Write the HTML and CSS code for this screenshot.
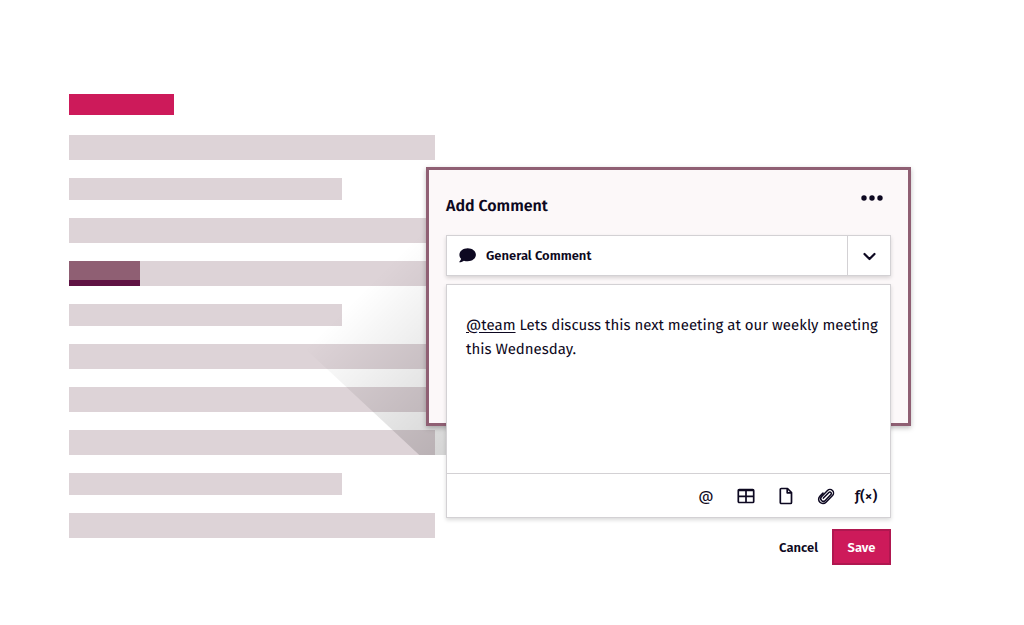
FILE: index.html
```html
<!DOCTYPE html>
<html lang="en">
<head>
<meta charset="UTF-8">
<title>Add Comment</title>
<meta name="viewport" content="width=device-width, initial-scale=1.0">
<link rel="stylesheet" href="styles.css">
</head>
<body>

<main class="stage">
  <!-- Placeholder document -->
  <div class="document" aria-hidden="true">
    <div class="line title"></div>
    <div class="line"></div>
    <div class="line short"></div>
    <div class="line"></div>
    <div class="line"><div class="highlight"></div></div>
    <div class="line short"></div>
    <div class="line"></div>
    <div class="line"></div>
    <div class="line"></div>
    <div class="line short"></div>
    <div class="line"></div>
    <div class="cast-shadow"></div>
  </div>

  <div class="comment">
    <div class="frame"></div>
    <form class="comment-form">
      <div class="comment-header">
        <h1 class="comment-title">Add Comment</h1>
        <button type="button" class="more" aria-label="More options">
          <svg width="22" height="6" viewBox="0 0 22 6" fill="currentColor"><circle cx="3" cy="3" r="2.7"/><circle cx="11" cy="3" r="2.7"/><circle cx="19" cy="3" r="2.7"/></svg>
        </button>
      </div>

      <div class="type-picker">
        <label class="type-icon" for="commentType" aria-label="Comment type">
          <svg width="17" height="16" viewBox="0 0 17 16" fill="currentColor"><path d="M8.700.3C4.100.3.400 3.200.400 6.800c0 1.600.7 2.900 1.700 4C1.700 12.100.9 13.200.3 13.800c-.2.2 0 .5.2.5 1.900 0 3.400-.8 4.400-1.600 1.200.4 2.400.6 3.800.6 4.600 0 8.200-2.900 8.200-6.500S13.300.3 8.700.3z"/></svg>
        </label>
        <select class="type-select" id="commentType">
          <option>General Comment</option>
        </select>
        <span class="type-arrow">
          <svg width="14" height="10" viewBox="0 0 14 10" fill="none" stroke="currentColor" stroke-width="2.200" stroke-linecap="round" stroke-linejoin="round"><path d="M2.500 3l5 5 5-5"/></svg>
        </span>
      </div>

      <div class="editor">
        <div class="editor-body" contenteditable="true" role="textbox" aria-multiline="true" aria-label="Comment">
          <p class="editor-text"><u class="mention">@team</u> Lets discuss this next meeting at our weekly meeting this Wednesday.</p>
        </div>
        <div class="toolbar">
          <button type="button" class="tool" aria-label="Mention someone">@</button>
          <button type="button" class="tool" aria-label="Insert table">
            <svg width="18" height="16" viewBox="0 0 18 16" fill="none" stroke="currentColor" stroke-width="1.700"><rect x="1.300" y="1.500" width="15.400" height="13" rx="1"/><path d="M1.500 2.300h15M1.500 8.300h15M9 2v12.500"/></svg>
          </button>
          <button type="button" class="tool" aria-label="Insert document">
            <svg width="14" height="18" viewBox="0 0 14 18" fill="none" stroke="currentColor" stroke-width="1.700" stroke-linejoin="round"><path d="M2.300 1.500h6.200l4 4v10a1 1 0 0 1-1 1H2.300a1 1 0 0 1-1-1v-13a1 1 0 0 1 1-1z"/><path d="M8.200 1.700v4.100h4.200"/></svg>
          </button>
          <button type="button" class="tool" aria-label="Attach file">
            <svg width="18" height="18" viewBox="0 0 24 24" fill="none" stroke="currentColor" stroke-width="2" stroke-linecap="round" stroke-linejoin="round"><path d="M8.500 14.800l7.300-7.500a1.900 1.900 0 0 1 2.800 2.700l-7.600 7.900a3.500 3.500 0 0 1-5-4.900l8-8.200a4.600 4.600 0 0 1 6.700 6.500l-8.700 9a5.700 5.700 0 0 1-8.200-8l4.200-4.400"/></svg>
          </button>
          <button type="button" class="tool function" aria-label="Insert function">ƒ(×)</button>
        </div>
      </div>

      <div class="actions">
        <button type="reset" class="button">Cancel</button>
        <button type="submit" class="button primary">Save</button>
      </div>
    </form>
  </div>
</main>

</body>
</html>
```
FILE: styles.css
```css
* {
  box-sizing: border-box;
}
body {
  margin: 0;
  background-color: white;
  color: #0d0821;
  font-family: "Fira Sans", "Noto Sans", sans-serif;
  font-size: 15px;
  text-rendering: geometricPrecision;
}
button, select {
  margin: 0;
  padding: 0;
  border: 0;
  background: none;
  color: inherit;
  font: inherit;
  cursor: pointer;
}
svg {
  display: block;
}
.stage {
  display: grid;
  grid-template-columns: 366fr 476fr;
  align-items: start;
  padding: 94px 113px 48px 69px;
}

/* Document */
.document {
  position: relative;
  display: flex;
  flex-direction: column;
  gap: 18px;
}
.line {
  height: 25px;
  background-color: #ddd3d7;
}
.line.short {
  width: 74.5%;
  height: 22px;
}
.line.title {
  width: 28.7%;
  height: 21px;
  margin-bottom: 2px;
  background-color: #cd1a5a;
}
.highlight {
  width: 71px;
  height: 100%;
  background-color: #8f5f73;
  border-bottom: 6px solid #5f1243;
}
/* Falls across the lines from the comment down to the lower left */
.cast-shadow {
  position: absolute;
  right: -12px;
  bottom: 83px;
  width: 146px;
  height: 225px;
  background: linear-gradient(135deg, rgba(0,0,0,0) 33%, rgba(0,0,0,.17) 100%);
  clip-path: polygon(0 0, 100% 0, 100% 100%, 81% 100%, 0 51%);
}

/* Comment: the form runs out past the bottom of the frame */
.comment {
  position: relative;
  display: grid;
  grid-template-rows: 259px auto;
  margin: 73px 0 0 -9px;
}
.frame {
  grid-area: 1 / 1;
  background-color: #fcf8f9;
  border: 3px solid #8f5f73;
  box-shadow: 0 2px 5px rgba(0,0,0,.25);
}
.comment-form {
  grid-area: 1 / 1 / 3 / 2;
  padding: 24px 20px 0;
}
.comment-header {
  display: flex;
  justify-content: space-between;
  align-items: flex-start;
  margin-bottom: 12px;
}
.comment-title {
  margin: 0;
  font-size: 16px;
  font-weight: 600;
  line-height: 32px;
}
.more {
  display: flex;
  align-items: center;
  height: 14px;
  margin-right: 8px;
}
.type-picker {
  display: flex;
  height: 41px;
  margin-bottom: 8px;
  background-color: white;
  border: 1px solid #d3d1d4;
  box-shadow: 0 2px 4px rgba(0,0,0,.15);
}
.type-icon {
  display: flex;
  align-items: center;
  padding: 0 10px 0 12px;
}
.type-select {
  flex: 1;
  min-width: 0;
  appearance: none;
  font-size: 13px;
  font-weight: 600;
}
.type-arrow {
  display: flex;
  justify-content: center;
  align-items: center;
  width: 43px;
  border-left: 1px solid #d3d1d4;
  pointer-events: none;
}
.editor {
  margin-bottom: 11px;
  background-color: white;
  border: 1px solid #d3d1d4;
  box-shadow: 0 2px 4px rgba(0,0,0,.15);
}
.editor-body {
  min-height: 188px;
  padding: 28px 9px 28px 19px;
  line-height: 24px;
}
.editor-text {
  margin: 0;
}
.mention {
  text-underline-offset: 2px;
}
.toolbar {
  display: flex;
  justify-content: flex-end;
  align-items: center;
  gap: 18px;
  height: 44px;
  padding-right: 13px;
  border-top: 1px solid #d3d1d4;
}
.tool {
  display: flex;
  justify-content: center;
  align-items: center;
  width: 22px;
  height: 24px;
}
.function {
  font-weight: 500;
}
.actions {
  display: flex;
  justify-content: flex-end;
  gap: 14px;
}
.button {
  height: 36px;
  font-size: 13px;
  font-weight: 600;
}
.button.primary {
  min-width: 59px;
  padding: 0 12px;
  background-color: #cd1a5a;
  border: 2px solid #b01750;
  color: white;
}
```
